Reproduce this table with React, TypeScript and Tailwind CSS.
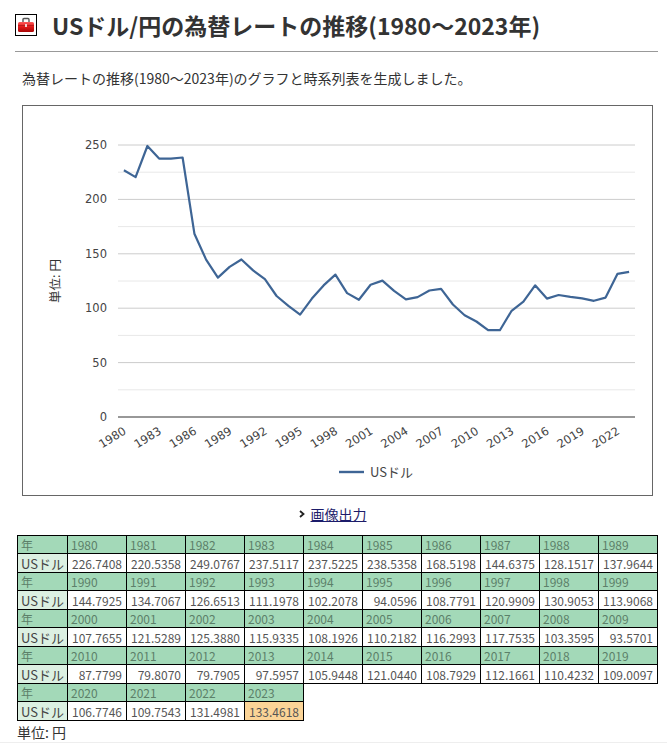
import { Fragment } from "react";

const rows: [number, number][] = [
  [1980, 226.7408], [1981, 220.5358], [1982, 249.0767], [1983, 237.5117], [1984, 237.5225],
  [1985, 238.5358], [1986, 168.5198], [1987, 144.6375], [1988, 128.1517], [1989, 137.9644],
  [1990, 144.7925], [1991, 134.7067], [1992, 126.6513], [1993, 111.1978], [1994, 102.2078],
  [1995, 94.0596], [1996, 108.7791], [1997, 120.9909], [1998, 130.9053], [1999, 113.9068],
  [2000, 107.7655], [2001, 121.5289], [2002, 125.388], [2003, 115.9335], [2004, 108.1926],
  [2005, 110.2182], [2006, 116.2993], [2007, 117.7535], [2008, 103.3595], [2009, 93.5701],
  [2010, 87.7799], [2011, 79.807], [2012, 79.7905], [2013, 97.5957], [2014, 105.9448],
  [2015, 121.044], [2016, 108.7929], [2017, 112.1661], [2018, 110.4232], [2019, 109.0097],
  [2020, 106.7746], [2021, 109.7543], [2022, 131.4981], [2023, 133.4618],
];

// plot area inside the chart frame
const left = 95;
const right = 612;
const zeroY = 311;
const k = 272 / 250;
const step = (right - left) / 44;
const px = (i: number) => left + (i + 0.5) * step;
const py = (v: number) => zeroY - v * k;

const ToolboxIcon = () => (
  <div className="w-[22px] h-[22px] border border-black flex items-center justify-center bg-white">
    <svg width="18" height="16" viewBox="0 0 18 16">
      <defs>
        <linearGradient id="tb" x1="0" y1="0" x2="0" y2="1">
          <stop offset="0" stopColor="#ff5a5a" />
          <stop offset="0.5" stopColor="#e01818" />
          <stop offset="1" stopColor="#a80808" />
        </linearGradient>
      </defs>
      <path d="M6 5 V2.5 Q6 1.5 7 1.5 H11 Q12 1.5 12 2.5 V5" fill="none" stroke="#555" strokeWidth="1.4" />
      <rect x="1" y="5" width="16" height="10" rx="1.5" fill="url(#tb)" />
      <rect x="1" y="8" width="16" height="0.8" fill="#8a0a0a" opacity="0.6" />
      <rect x="8" y="7" width="2" height="3" fill="#f2d0d0" />
    </svg>
  </div>
);

const Chart = () => {
  const pts = rows.map(([, v], i) => `${px(i).toFixed(1)},${py(v).toFixed(1)}`).join(" ");
  const ticks = [0, 50, 100, 150, 200, 250];
  const minor = [25, 75, 125, 175, 225];
  return (
    <svg width="629" height="389" className="block">
      {minor.map((t) => (
        <line key={t} x1={left} x2={right} y1={py(t)} y2={py(t)} stroke="#e8e8e8" strokeWidth="1" />
      ))}
      {ticks.slice(1).map((t) => (
        <line key={t} x1={left} x2={right} y1={py(t)} y2={py(t)} stroke="#cccccc" strokeWidth="1" />
      ))}
      <line x1={left} x2={right} y1={zeroY} y2={zeroY} stroke="#333" strokeWidth="1.2" />
      {ticks.map((t) => (
        <text
          key={t}
          x={84}
          y={py(t) + 4}
          textAnchor="end"
          fontSize="11.5"
          fill="#444"
          fontFamily="'DejaVu Sans', sans-serif"
        >
          {t}
        </text>
      ))}
      {rows.map(([y], i) =>
        i % 3 === 0 ? (
          <text
            key={y}
            transform={`translate(${px(i) + 3},${327}) rotate(-32)`}
            textAnchor="end"
            fontSize="11.5"
            fill="#444"
            fontFamily="'DejaVu Sans', sans-serif"
          >
            {y}
          </text>
        ) : null
      )}
      <text
        transform="translate(37,175) rotate(-90)"
        textAnchor="middle"
        fontSize="12.5"
        fill="#333"
        fontFamily="'Noto Sans CJK JP', sans-serif"
      >
        単位: 円
      </text>
      <polyline points={pts} fill="none" stroke="#3e6595" strokeWidth="2.2" strokeLinejoin="round" />
      <line x1={316} x2={341} y1={366} y2={366} stroke="#3e6595" strokeWidth="2.4" />
      <text x={347} y={371} fontSize="13" fill="#444" fontFamily="'Noto Sans CJK JP', sans-serif">
        USドル
      </text>
    </svg>
  );
};

const groups = [0, 10, 20, 30, 40].map((s) => rows.slice(s, s + 10));

const DataTable = () => (
  <table className="ml-[17px] border-collapse table-fixed text-[12px]">
    <colgroup>
      <col className="w-[50px]" />
      {Array.from({ length: 10 }).map((_, i) => (
        <col key={i} className="w-[59px]" />
      ))}
    </colgroup>
    <tbody>
      {groups.map((g) => (
        <Fragment key={g[0][0]}>
          <tr className="h-[18px]">
            <td className="border border-black bg-[#a3d9b8] text-[#5c8069] px-[3px] leading-[16px]">年</td>
            {g.map(([y]) => (
              <td key={y} className="border border-black bg-[#a3d9b8] text-[#5c8069] px-[3px] leading-[16px]">
                {y}
              </td>
            ))}
          </tr>
          <tr className="h-[19px]">
            <td className="border border-black bg-[#dcf0e2] text-[#444] px-[3px] leading-[17px] text-[13px]">USドル</td>
            {g.map(([y, v]) => (
              <td
                key={y}
                className={`border border-black text-right px-[4px] leading-[17px] text-[#555] ${
                  y === 2023 ? "bg-[#fbd497]" : "bg-white"
                }`}
              >
                {v.toFixed(4)}
              </td>
            ))}
          </tr>
        </Fragment>
      ))}
    </tbody>
  </table>
);

export default function App() {
  return (
    <div className="w-[667px] h-[743px] bg-white text-[#333] font-['Noto_Sans_CJK_JP',sans-serif] overflow-hidden flex flex-col">
      <div className="ml-[15px] w-[643px] border-b border-[#999] pt-[10px] pb-[11px] flex items-center">
        <ToolboxIcon />
        <h1 className="ml-[15px] text-[23px] font-bold leading-[30px] text-[#333]">
          USドル/円の為替レートの推移(1980～2023年)
        </h1>
      </div>
      <p className="ml-[22px] mt-[16px] text-[14px] leading-[20px] text-[#333]">
        為替レートの推移(1980～2023年)のグラフと時系列表を生成しました。
      </p>
      <div className="ml-[22px] mt-[17px] w-[631px] h-[391px] border border-[#666] bg-white">
        <Chart />
      </div>
      <div className="mt-[8px] flex items-center justify-center gap-[6px] h-[20px] pr-[2px]">
        <svg width="6" height="8" viewBox="0 0 6 8">
          <path d="M1 1 L4.5 4 L1 7" fill="none" stroke="#222" strokeWidth="1.8" />
        </svg>
        <a href="#" className="text-[14px] leading-[20px] text-[#1c1c6a] underline">
          画像出力
        </a>
      </div>
      <div className="mt-[11px]">
        <DataTable />
      </div>
      <p className="ml-[17px] mt-[1px] text-[14px] leading-[20px] text-[#333]">単位: 円</p>
      <div className="mt-auto h-[3px] bg-[#eee]" />
    </div>
  );
}
